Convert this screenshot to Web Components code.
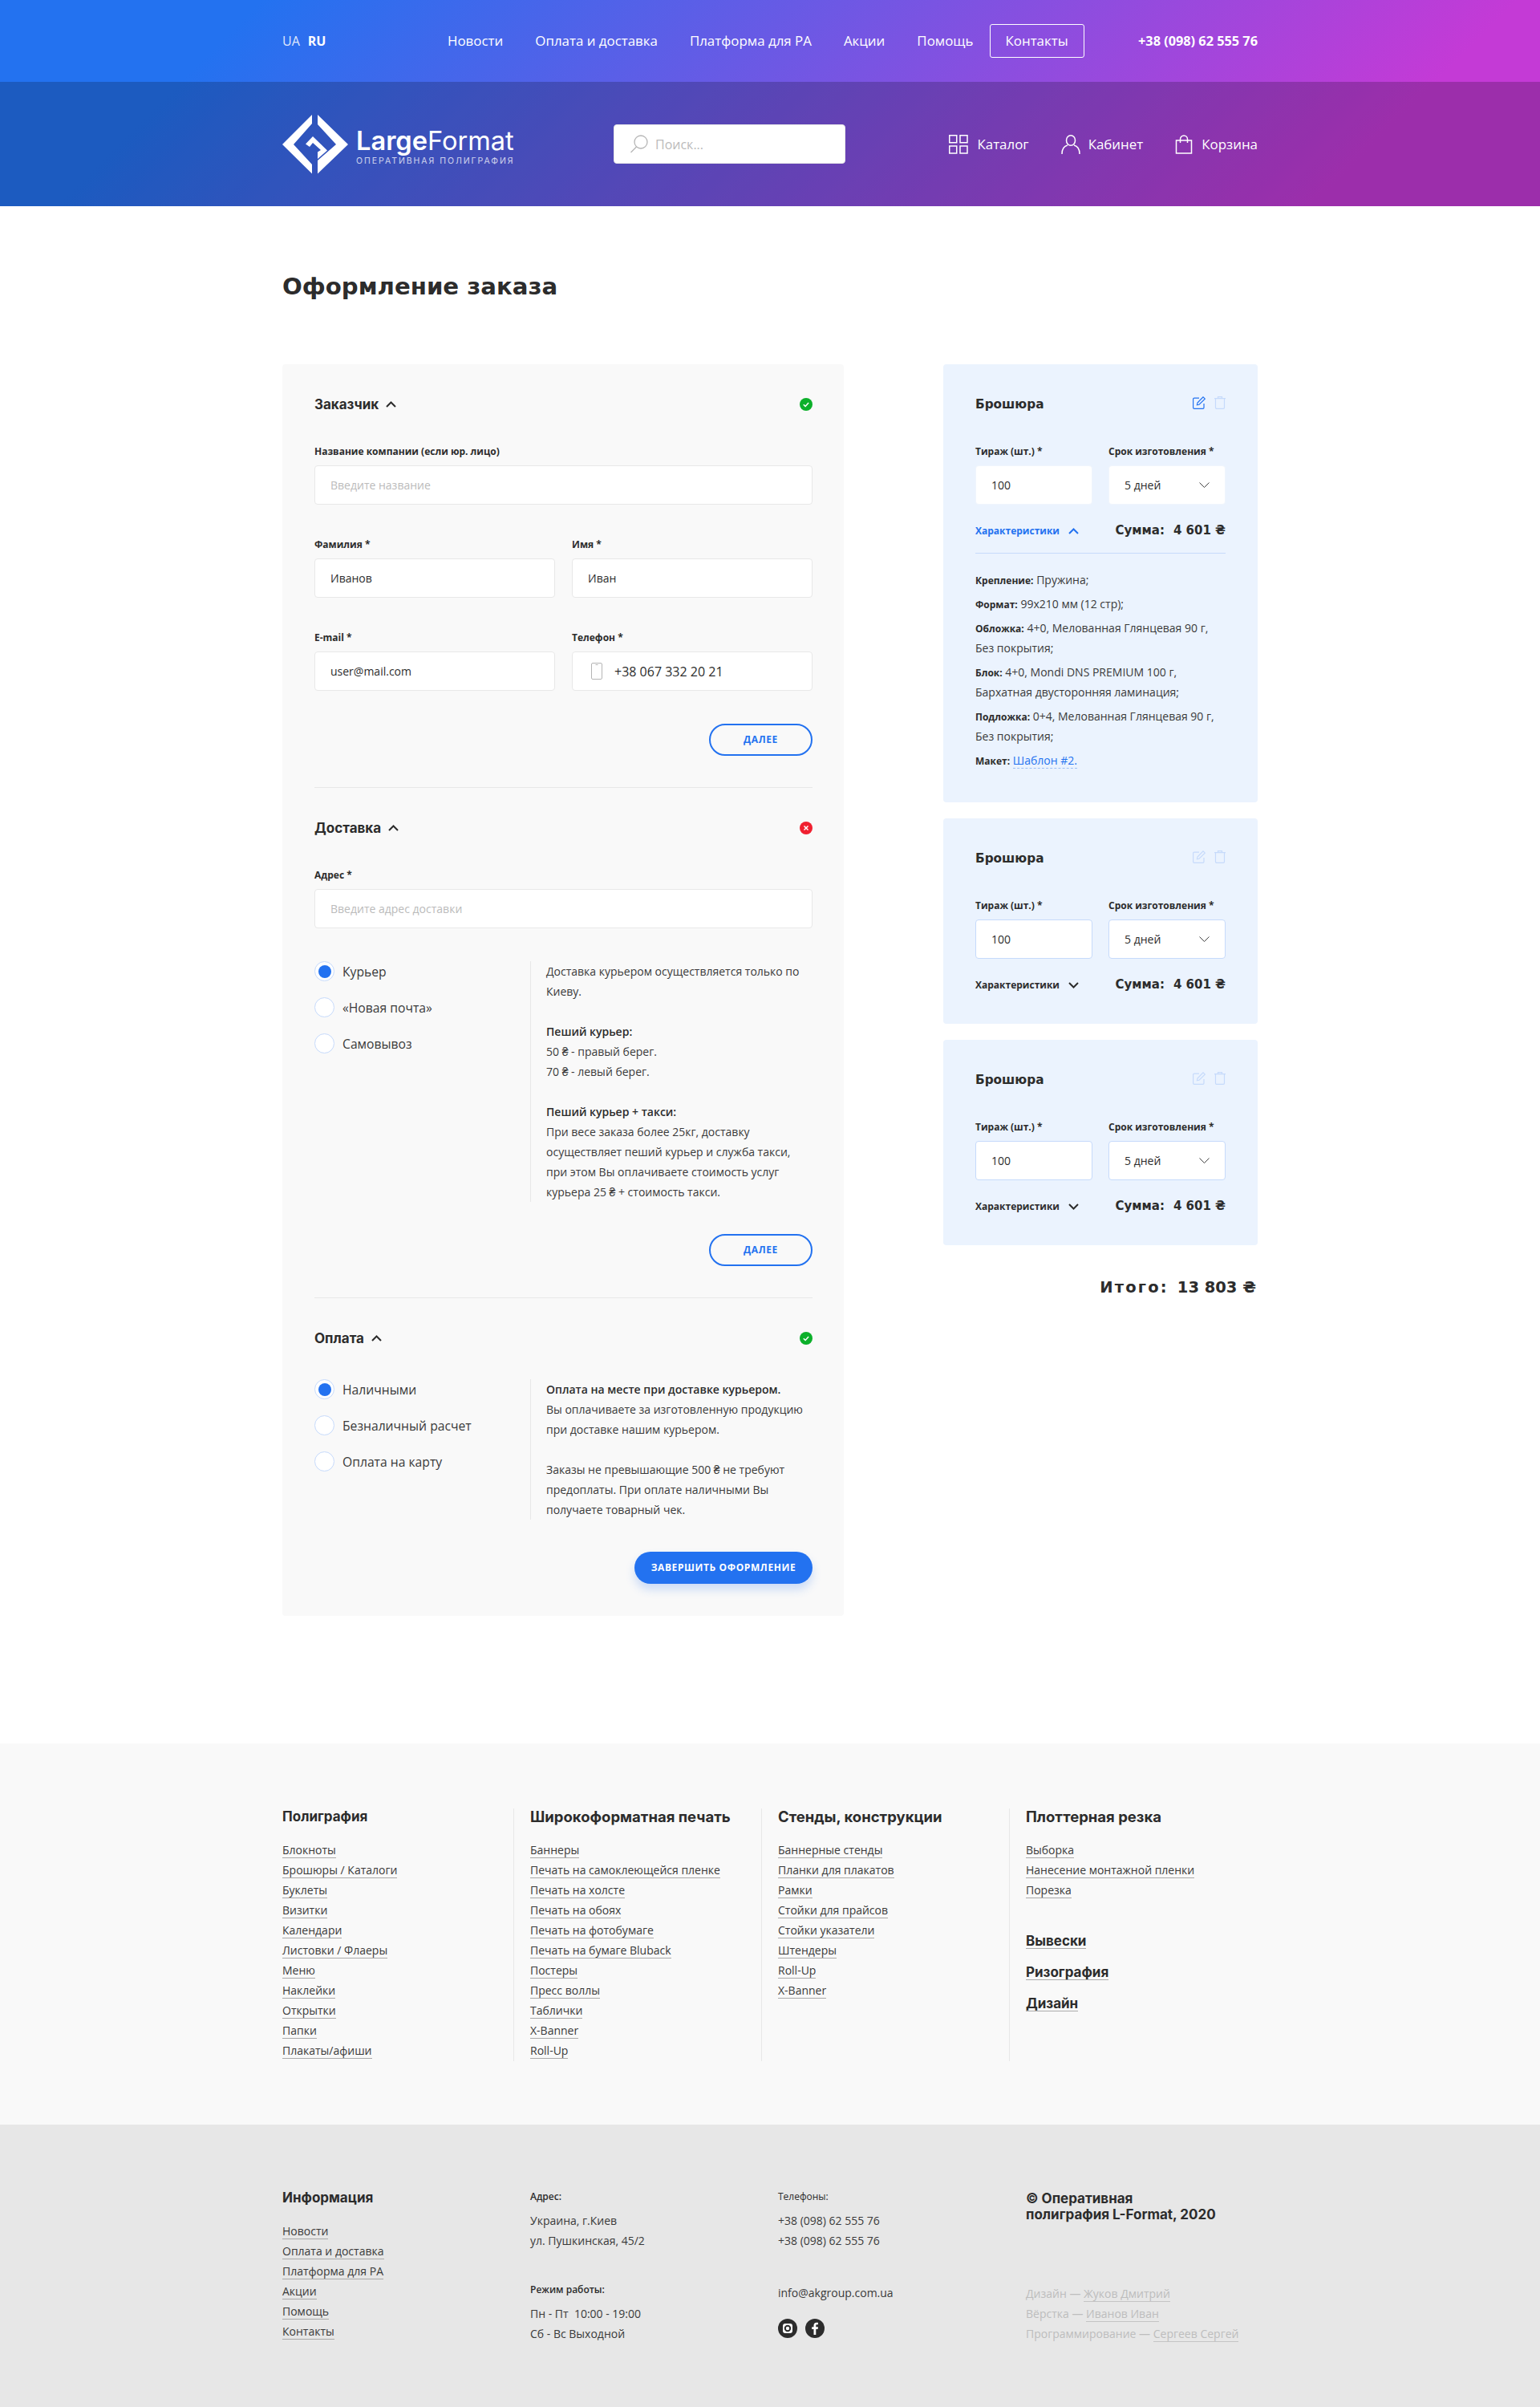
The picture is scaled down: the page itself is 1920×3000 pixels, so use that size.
<!DOCTYPE html>
<html lang="ru"><head><meta charset="utf-8"><title>Оформление заказа</title>
<style>
html,body{margin:0;padding:0;background:#fff;color:#2c2c2c;font-family:"Open Sans","Liberation Sans",sans-serif;font-size:14px}
</style></head><body>
<site-header></site-header>
<checkout-page>
  <order-section title="Заказчик" status="ok">
    <form-row><form-field label="Название компании (если юр. лицо)" placeholder="Введите название"></form-field></form-row>
    <form-row cols="2"><form-field label="Фамилия *" value="Иванов"></form-field><form-field label="Имя *" value="Иван"></form-field></form-row>
    <form-row cols="2"><form-field label="E-mail *" value="user@mail.com"></form-field><form-field label="Телефон *" value="+38 067 332 20 21" phone></form-field></form-row>
    <action-button>Далее</action-button>
  </order-section>
  <order-section title="Доставка" status="err">
    <form-row><form-field label="Адрес *" placeholder="Введите адрес доставки"></form-field></form-row>
    <choice-panel options="Курьер|«Новая почта»|Самовывоз">
      Доставка курьером осуществляется только по Киеву.<br><br>
      <b>Пеший курьер:</b><br>50 ₴ - правый берег.<br>70 ₴ - левый берег.<br><br>
      <b>Пеший курьер + такси:</b><br>При весе заказа более 25кг, доставку осуществляет пеший курьер и служба такси, при этом Вы оплачиваете стоимость услуг курьера 25 ₴ + стоимость такси.
    </choice-panel>
    <action-button>Далее</action-button>
  </order-section>
  <order-section title="Оплата" status="ok" last>
    <choice-panel flush options="Наличными|Безналичный расчет|Оплата на карту">
      <b>Оплата на месте при доставке курьером.</b><br>Вы оплачиваете за изготовленную продукцию при доставке нашим курьером.<br><br>
      Заказы не превышающие 500 ₴ не требуют предоплаты. При оплате наличными Вы получаете товарный чек.
    </choice-panel>
    <action-button primary>Завершить оформление</action-button>
  </order-section>
  <order-card slot="side" open>
    <p><b>Крепление:</b> <span>Пружина;</span></p>
    <p><b>Формат:</b> <span>99х210 мм (12 стр);</span></p>
    <p><b>Обложка:</b> <span>4+0, Мелованная Глянцевая 90 г,</span><br><span>Без покрытия;</span></p>
    <p><b>Блок:</b> <span>4+0, Mondi DNS PREMIUM 100 г,</span><br><span>Бархатная двусторонняя ламинация;</span></p>
    <p><b>Подложка:</b> <span>0+4, Мелованная Глянцевая 90 г,</span><br><span>Без покрытия;</span></p>
    <p><b>Макет:</b> <a>Шаблон #2.</a></p>
  </order-card>
  <order-card slot="side"></order-card>
  <order-card slot="side"></order-card>
</checkout-page>
<link-footer></link-footer>
<info-footer></info-footer>
<script>
const HEAD='Inter,"Liberation Sans",sans-serif';
const WIDE='"DejaVu Sans",Inter,sans-serif';
const chev=(up,c='#2c2c2c')=>`<svg width="13" height="8" viewBox="0 0 13 8" fill="none" stroke="${c}" stroke-width="2"><path d="${up?'M1 7l5.5-5.5L12 7':'M1 1l5.5 5.5L12 1'}"/></svg>`;
function def(name,render){customElements.define(name,class extends HTMLElement{connectedCallback(){if(this.shadowRoot)return;const r=this.attachShadow({mode:'open'});r.innerHTML=render(this);}});}

def('site-header',()=>`<style>
:host{display:block;background:linear-gradient(135deg,#2372f0 15%,#c43ad6 87%);color:#fff;font-size:16.9px}
.top,.main{width:1216px;margin:0 auto;display:flex;align-items:center}
.top{height:102px}
.band{background:rgba(0,0,0,.2)}
.main{height:155px}
.lang{width:186px;display:flex;gap:10px;font-size:16px}.lang span{opacity:.85}.lang b{font-weight:700}
nav{display:flex;align-items:center}
nav a{padding:0 20px;line-height:42px;white-space:nowrap}
nav a.box{border:1px solid #fff;border-radius:3px;line-height:40px;padding:0 19px}
.tel{margin-left:auto;font-weight:700;font-size:16.3px}
.logo{display:flex;align-items:center;gap:10px;width:413px}
.lt{display:flex;flex-direction:column;gap:3px;padding-top:8px}
.ln{font:400 32.6px/32px ${HEAD};white-space:nowrap}.ln b{font-weight:600}
.ls{font:400 10.5px/14px ${HEAD};letter-spacing:1.95px;opacity:.75;white-space:nowrap}
.search{width:289px;height:49px;box-sizing:border-box;background:#fff;border-radius:4px;border:1px solid #e8e8e8;display:flex;align-items:center;padding-left:19px;gap:9px;color:#bbb;font-size:16px}
.acts{margin-left:auto;display:flex;align-items:center;gap:40px}
.acts a{display:flex;align-items:center;gap:11px}
</style>
<div class="top"><div class="lang"><span>UA</span><b>RU</b></div>
<nav><a>Новости</a><a>Оплата и доставка</a><a>Платформа для РА</a><a>Акции</a><a>Помощь</a><a class="box">Контакты</a></nav>
<div class="tel">+38 (098) 62 555 76</div></div>
<div class="band"><div class="main">
<div class="logo"><svg width="82" height="74" viewBox="0 0 82 74" fill="#fff"><path d="M37 0L0 37l37 36.500V62L14 37 37 11zM44 0l38 37-38 36.500V57l23-20-23-25z"/><path d="M29 36.500L38 27l18 17.500L44 55v-8.500l4-2.500-10-9-4 5z"/></svg>
<div class="lt"><div class="ln"><b>Large</b>Format</div><div class="ls">ОПЕРАТИВНАЯ ПОЛИГРАФИЯ</div></div></div>
<div class="search"><svg width="23" height="23" viewBox="0 0 23 23" fill="none" stroke="#b5b5b5" stroke-width="1.300"><circle cx="14" cy="9" r="8"/><path d="M8.500 15L1.500 22"/></svg>Поиск...</div>
<div class="acts">
<a><svg width="24" height="24" viewBox="0 0 24 24" fill="none" stroke="#fff" stroke-width="1.500"><rect x=".75" y=".75" width="9" height="9"/><rect x="14" y=".75" width="9" height="9"/><rect x=".75" y="14" width="9" height="9"/><rect x="14" y="14" width="9" height="9"/></svg>Каталог</a>
<a style="gap:10px"><svg width="24" height="24" viewBox="0 0 24 24" fill="none" stroke="#fff" stroke-width="1.500"><ellipse cx="12" cy="7" rx="5.500" ry="6.200"/><path d="M1 24c0-6 3-10 7-11M23 24c0-6-3-10-7-11"/></svg>Кабинет</a>
<a><svg width="22" height="24" viewBox="0 0 22 24" fill="none" stroke="#fff" stroke-width="1.500"><path d="M1.500 7h19v16h-19z"/><path d="M6.500 10V5.500a4.500 4.500 0 0 1 9 0V10"/></svg>Корзина</a>
</div></div></div>`);

def('checkout-page',()=>`<style>
:host{display:block;width:1216px;margin:0 auto;padding-bottom:159px}
h1{margin:0;padding:80px 0 77px;font:700 29.2px/40px ${WIDE};color:#2c2c2c}
.cols{display:flex;justify-content:space-between;align-items:flex-start}
.left{width:700px;box-sizing:border-box;background:#f9f9f9;border-radius:4px;padding:0 39px 0 40px}
.right{width:392px;display:flex;flex-direction:column;gap:20px}
.total{font:700 19.5px/30px ${WIDE};text-align:right;margin-top:18px;padding-right:2px;white-space:nowrap}
.total span{letter-spacing:2.2px;margin-right:11px}
</style><h1>Оформление заказа</h1><div class="cols"><div class="left"><slot></slot></div>
<div class="right"><slot name="side"></slot><div class="total"><span>Итого:</span>13 803 ₴</div></div></div>`);

def('order-section',e=>`<style>
:host{display:block;padding:40px 0 39px;border-bottom:1px solid #e8e8e8}
:host([last]){border-bottom:0;padding-bottom:40px}
.h{display:flex;align-items:center;height:20px;margin-bottom:41px;gap:9px;font:700 17px/20px ${HEAD};color:#2c2c2c}
.s{margin-left:auto;width:16px;height:16px}
</style><div class="h">${e.getAttribute('title')}${chev(true)}
${e.getAttribute('status')=='ok'
?'<svg class="s" viewBox="0 0 16 16"><circle cx="8" cy="8" r="8" fill="#0cb02a"/><path d="M4.800 8.200l2.300 2.300 4-4.500" fill="none" stroke="#fff" stroke-width="1.500"/></svg>'
:'<svg class="s" viewBox="0 0 16 16"><circle cx="8" cy="8" r="8" fill="#f02030"/><path d="M5.500 5.500l5 5M10.500 5.500l-5 5" fill="none" stroke="#fff" stroke-width="1.500"/></svg>'}
</div><slot></slot>`);

def('form-row',e=>`<style>:host{display:grid;grid-template-columns:${e.getAttribute('cols')?'300px 300px':'1fr'};justify-content:space-between;gap:20px;margin-bottom:42px}:host(:last-of-type){margin-bottom:41px}</style><slot></slot>`);

def('form-field',e=>{const v=e.getAttribute('value'),p=e.getAttribute('placeholder'),ph=e.hasAttribute('phone');return `<style>
:host{display:block}
label{display:block;font:700 12px/16px "Open Sans",sans-serif;margin-bottom:9px;color:#2c2c2c;white-space:nowrap}
.i{height:49px;box-sizing:border-box;background:#fff;border:1px solid #e8e8e8;border-radius:4px;display:flex;align-items:center;padding-left:19px;font-size:14px;color:${v?'#2c2c2c':'#bbb'}}
.ph{font-size:16px;padding-left:23px;gap:15px}
</style><label>${e.getAttribute('label')}</label><div class="i ${ph?'ph':''}">${ph?'<svg width="14" height="21" viewBox="0 0 14 21" fill="none" stroke="#b5b5b5"><rect x=".5" y=".5" width="13" height="20" rx="1.500"/><path d="M5.500 2.500h3M7 18h.1"/></svg>':''}${v||p}</div>`});

def('action-button',e=>{const pr=e.hasAttribute('primary');return `<style>
:host{display:flex;justify-content:flex-end}
a{box-sizing:border-box;height:40px;${pr?'width:222px;background:#2372f0;color:#fff;box-shadow:0 7px 12px rgba(35,114,240,.22);':'width:129px;border:2px solid #2372f0;color:#2372f0;'}border-radius:20px;display:flex;align-items:center;justify-content:center;font:700 12px/1 "Open Sans",sans-serif;letter-spacing:.6px;text-transform:uppercase}
</style><a><slot></slot></a>`});

def('choice-panel',e=>`<style>
:host{display:grid;grid-template-columns:270px 1fr;margin:0 0 40px}
.o{display:flex;flex-direction:column;gap:20px;border-right:1px solid #e8e8e8}
.r{display:flex;align-items:center;gap:10px;height:25px;font-size:15.7px;color:#3a3a3a;white-space:nowrap}
.r i{box-sizing:border-box;width:25px;height:25px;border-radius:50%;border:1px solid #c6dafb;background:#fff;display:flex;align-items:center;justify-content:center}
.r.on i::after{content:"";width:16px;height:16px;border-radius:50%;background:#2372f0}
.t{padding-left:19px;font-size:14px;line-height:25px;color:#3a3a3a}
</style><div class="o">${e.getAttribute('options').split('|').map((o,i)=>`<div class="r ${i?'':'on'}"><i></i>${o}</div>`).join('')}</div><div class="t"><slot></slot></div>`);

def('order-card',e=>{const o=e.hasAttribute('open');const ic=o?'#2372f0':'#c6dafb';return `<style>
:host{display:block;background:#ebf3fe;border-radius:4px;padding:40px 40px ${o?40:38}px}
.h{display:flex;align-items:center;height:20px;margin-bottom:41px;font:700 15.3px/20px ${WIDE};color:#2c2c2c;gap:11px}
.h span{margin-right:auto}
.h svg{margin-top:-4px}
.g{display:grid;grid-template-columns:1fr 1fr;gap:20px}
label{display:block;font:700 12px/16px "Open Sans",sans-serif;margin-bottom:9px;white-space:nowrap;color:#2c2c2c}
.i{height:49px;box-sizing:border-box;background:#fff;border:1px solid ${o?'#f0f5fd':'#c6dafb'};border-radius:4px;display:flex;align-items:center;justify-content:space-between;padding:0 19px;font-size:14px}
.row{display:flex;align-items:center;height:20px;margin-top:23px;justify-content:space-between}
.c{display:flex;align-items:center;gap:11px;font:700 12px/20px "Open Sans",sans-serif;color:${o?'#2372f0':'#2c2c2c'}}
.s{font:700 15px/20px ${WIDE};margin-top:-3px;white-space:nowrap}
.s span{margin-right:11px}
.sp{border-top:1px solid #c6dafb;margin-top:17px;padding-top:20px;display:flex;flex-direction:column;gap:5px}
::slotted(p){margin:0;font-size:14px;line-height:25px;color:#3a3a3a}
</style>
<div class="h"><span>Брошюра</span>
<svg width="16" height="16" viewBox="0 0 16 16" fill="none" stroke="${ic}" stroke-width="1.200"><path d="M14 9v5a1.400 1.400 0 0 1-1.400 1.400H2A1.400 1.400 0 0 1 .6 14V3.500A1.400 1.400 0 0 1 2 2.100h6"/><path d="M6 8l7-7.200 2.300 2.300-7.300 7.200-2.600.5z"/></svg>
<svg width="14" height="16" viewBox="0 0 14 16" fill="none" stroke="#c6dafb" stroke-width="1.200"><path d="M0 2.600h14M4.500 2.500V.6h5v1.900M1.500 2.600V14a1.400 1.400 0 0 0 1.400 1.400h8.200a1.400 1.400 0 0 0 1.400-1.400V2.600"/></svg></div>
<div class="g"><div><label>Тираж (шт.) *</label><div class="i">100</div></div>
<div><label>Срок изготовления *</label><div class="i">5 дней<svg width="13" height="7" viewBox="0 0 13 7" fill="none" stroke="#2c2c2c" stroke-width=".9"><path d="M.5.500l6 6 6-6"/></svg></div></div></div>
<div class="row"><div class="c">Характеристики ${chev(o,o?'#2372f0':'#2c2c2c')}</div><div class="s"><span>Сумма:</span>4 601 ₴</div></div>
${o?'<div class="sp"><slot></slot></div>':''}`});

const fcss=`
.t{font:700 17px/20px ${HEAD};color:#2c2c2c;white-space:nowrap}
ul{list-style:none;margin:20px 0 0;padding:0}
li{height:25px;display:flex;align-items:center}
a{display:inline-block;font-size:14px;line-height:18px;border-bottom:1px solid #aaa;color:#3a3a3a;white-space:nowrap}
`;
const ul=s=>`<ul>${s.split('|').map(x=>`<li><a>${x}</a></li>`).join('')}</ul>`;
def('link-footer',()=>`<style>
:host{display:block;background:#f9f9f9;padding:81px 0 79px}
.g{width:1216px;margin:0 auto;display:grid;grid-template-columns:repeat(4,289px);gap:20px}
.g>div{height:315px;box-sizing:border-box;border-right:1px solid #e8e8e8}
.g>div:last-child{border:0}
${fcss}
.t.w{font-size:18.5px}
.big{margin-top:20px}.big a{font:700 17px/18px ${HEAD};color:#2c2c2c}.first{margin-top:41px}
</style><div class="g">
<div><div class="t">Полиграфия</div>${ul('Блокноты|Брошюры / Каталоги|Буклеты|Визитки|Календари|Листовки / Флаеры|Меню|Наклейки|Открытки|Папки|Плакаты/афиши')}</div>
<div><div class="t w">Широкоформатная печать</div>${ul('Баннеры|Печать на самоклеющейся пленке|Печать на холсте|Печать на обоях|Печать на фотобумаге|Печать на бумаге Bluback|Постеры|Пресс воллы|Таблички|X-Banner|Roll-Up')}</div>
<div><div class="t w">Стенды, конструкции</div>${ul('Баннерные стенды|Планки для плакатов|Рамки|Стойки для прайсов|Стойки указатели|Штендеры|Roll-Up|X-Banner')}</div>
<div><div class="t w">Плоттерная резка</div>${ul('Выборка|Нанесение монтажной пленки|Порезка')}
<div class="big first"><a>Вывески</a></div><div class="big"><a>Ризография</a></div><div class="big"><a>Дизайн</a></div></div>
</div>`);

def('info-footer',()=>`<style>
:host{display:block;background:#e7e7e7;height:353px;box-sizing:border-box;padding-top:81px}
.g{width:1216px;margin:0 auto;display:grid;grid-template-columns:repeat(4,289px);gap:20px}
${fcss}
h5{margin:0 0 8px;font:600 12px/18px "Open Sans",sans-serif;color:#2c2c2c}
p{margin:0;font-size:14px;line-height:25px;color:#3a3a3a;white-space:nowrap}
.gap{margin-top:40px}
.soc{display:flex;gap:10px;margin-top:19.500px}
.cp{font:700 17px/20px ${HEAD};color:#2c2c2c;white-space:nowrap;padding-top:1px}
.cr{margin-top:76px}.cr p{color:#bdbdbd}.cr a{color:#bdbdbd;border-color:#c4c4c4;line-height:18px}
</style><div class="g">
<div><div class="t">Информация</div>${ul('Новости|Оплата и доставка|Платформа для РА|Акции|Помощь|Контакты')}</div>
<div><h5>Адрес:</h5><p>Украина, г.Киев</p><p>ул. Пушкинская, 45/2</p><h5 class="gap">Режим работы:</h5><p>Пн - Пт &nbsp;10:00 - 19:00</p><p>Сб - Вс Выходной</p></div>
<div><h5 style="font-weight:400">Телефоны:</h5><p>+38 (098) 62 555 76</p><p>+38 (098) 62 555 76</p><p class="gap">info@akgroup.com.ua</p>
<div class="soc"><svg width="24" height="24" viewBox="0 0 24 24"><circle cx="12" cy="12" r="12" fill="#2c2c2c"/><rect x="6" y="6" width="12" height="12" rx="3" fill="#fff"/><circle cx="12" cy="12" r="3.200" fill="none" stroke="#2c2c2c" stroke-width="2"/></svg>
<svg width="24" height="24" viewBox="0 0 24 24"><circle cx="12" cy="12" r="12" fill="#2c2c2c"/><path d="M13.300 20v-7h2.300l.4-2.700h-2.700V8.600c0-.8.300-1.300 1.400-1.300H16V4.900c-.3 0-1.100-.1-2-.1-2.100 0-3.500 1.300-3.500 3.500v2H8.200V13h2.300v7z" fill="#fff"/></svg></div></div>
<div><div class="cp">© Оперативная<br>полиграфия L-Format, 2020</div><div class="cr"><p>Дизайн — <a>Жуков Дмитрий</a></p><p>Вёрстка — <a>Иванов Иван</a></p><p>Программирование — <a>Сергеев Сергей</a></p></div></div>
</div>`);
</script>
<style>
order-card a{color:#2372f0;border-bottom:1px dashed #9dbff5}
order-card b{font-size:12px;font-weight:700;color:#2c2c2c;line-height:1}
choice-panel b{font-weight:600;color:#2c2c2c}
</style>
</body></html>
